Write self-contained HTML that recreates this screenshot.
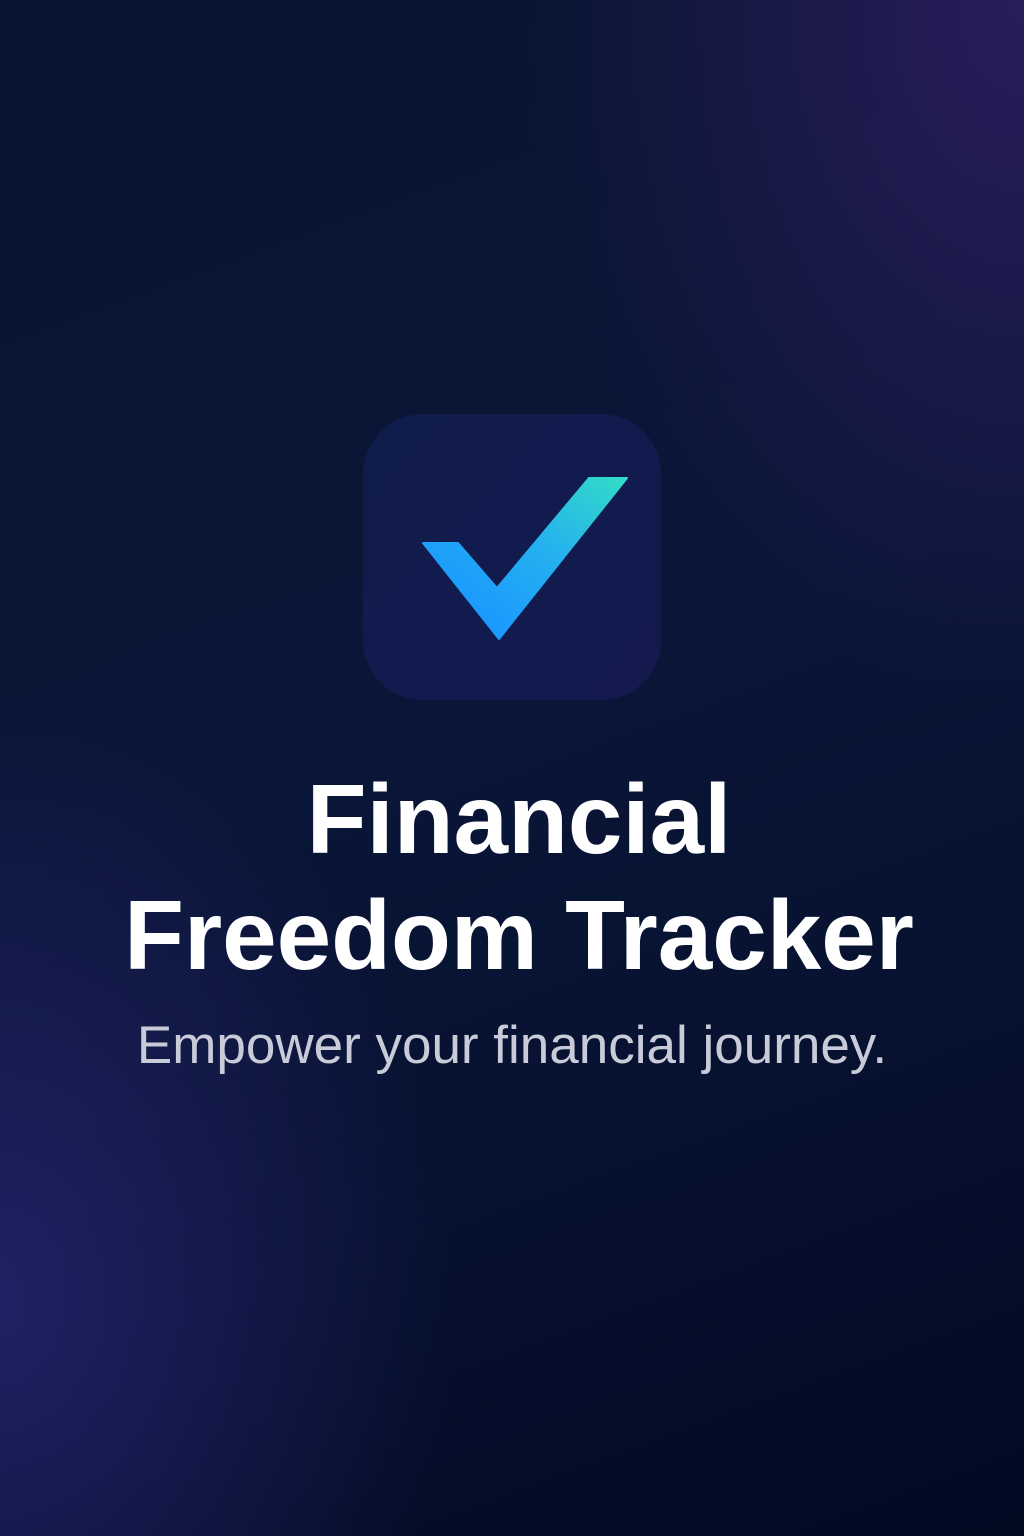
<!DOCTYPE html>
<html><head><style>
html,body{margin:0;padding:0}
body{width:1024px;height:1536px;position:relative;overflow:hidden;font-family:"Liberation Sans",sans-serif;
background:
radial-gradient(ellipse 500px 700px at 1024px 0px, rgba(45,30,95,0.9), rgba(45,30,95,0) 100%),
radial-gradient(ellipse 450px 600px at 0px 1300px, rgba(35,35,105,0.9), rgba(35,35,105,0) 100%),
linear-gradient(160deg,#081530 0%,#0a1638 45%,#071231 70%,#020a22 100%);}
.icon{position:absolute;left:363px;top:414px;width:298px;height:286px;border-radius:60px;background:linear-gradient(135deg,#101c4c,#141a4e);}
h1{position:absolute;left:0;width:1024px;top:761px;margin:0;text-align:center;color:#fff;font-weight:bold;font-size:98px;line-height:116px;letter-spacing:0px;padding-left:14px;box-sizing:border-box}
p{position:absolute;left:0;width:1024px;top:1014px;margin:0;text-align:center;color:#c9ccd8;font-size:53px;line-height:64px}
</style></head><body>
<div class="icon"></div>
<svg style="position:absolute;left:0;top:0" width="1024" height="1536">
<defs><linearGradient id="g" x1="498" y1="639" x2="627" y2="478" gradientUnits="userSpaceOnUse">
<stop offset="0" stop-color="#1a98ff"/><stop offset="0.5" stop-color="#25b2ee"/><stop offset="1" stop-color="#33dcc6"/></linearGradient></defs>
<path d="M423 543 L458 543 L497 588 L589 478 L627 478 L499 639 Z" fill="url(#g)" stroke="url(#g)" stroke-width="2" stroke-linejoin="round"/>
</svg>
<h1>Financial<br>Freedom Tracker</h1>
<p>Empower your financial journey.</p>
</body></html>
